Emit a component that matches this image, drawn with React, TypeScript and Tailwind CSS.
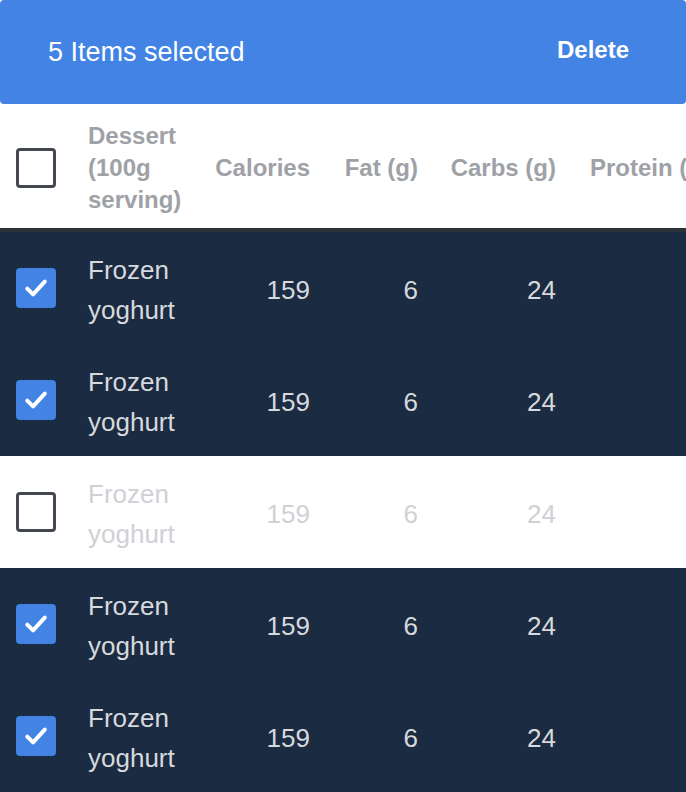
import React from "react";

/* ============================================================
   Data
============================================================ */

interface Row {
  name: string;
  calories: number;
  fat: number;
  carbs: number;
  selected: boolean;
}

const rows: Row[] = [
  { name: "Frozen yoghurt", calories: 159, fat: 6, carbs: 24, selected: true },
  { name: "Frozen yoghurt", calories: 159, fat: 6, carbs: 24, selected: true },
  { name: "Frozen yoghurt", calories: 159, fat: 6, carbs: 24, selected: false },
  { name: "Frozen yoghurt", calories: 159, fat: 6, carbs: 24, selected: true },
  { name: "Frozen yoghurt", calories: 159, fat: 6, carbs: 24, selected: true },
];

const grid =
  "grid grid-cols-[88px_110px_112px_108px_138px_1fr] items-center";

/* ============================================================
   Checkbox
============================================================ */

function Checkbox({ checked }: { checked: boolean }) {
  if (checked) {
    return (
      <div className="ml-4 flex h-10 w-10 items-center justify-center rounded-[4px] bg-[#4283e4]">
        <svg
          width="28"
          height="28"
          viewBox="0 0 24 24"
          fill="none"
          stroke="white"
          strokeWidth="3.4"
          strokeLinecap="round"
          strokeLinejoin="round"
        >
          <path d="M4.5 12.5l5 5L19.5 6.5" />
        </svg>
      </div>
    );
  }

  return (
    <div className="ml-4 h-10 w-10 rounded-[4px] border-[3px] border-[#434750]" />
  );
}

/* ============================================================
   Component
============================================================ */

export default function App() {
  const count = rows.length;

  return (
    <div
      className="h-[792px] w-[686px] overflow-hidden bg-white"
      style={{ fontFamily: '"Liberation Sans", Arial, sans-serif' }}
    >
      {/* Selection toolbar */}
      <div className="flex h-[104px] items-center justify-between rounded-[4px] bg-[#4283e4] pl-12 pr-[57px]">
        <span className="text-[27px] text-white">
          {count} Items selected
        </span>

        <span className="-mt-1 text-2xl font-bold text-white">
          Delete
        </span>
      </div>

      {/* Header */}
      <div
        className={`${grid} h-[128px] border-b-4 border-[#2d3139] text-2xl leading-8 font-bold text-[#9ea1a6]`}
      >
        <div className="pt-1">
          <Checkbox checked={false} />
        </div>
        <div className="pt-1">Dessert (100g serving)</div>
        <div className="pt-1 text-right">Calories</div>
        <div className="pt-1 text-right">Fat (g)</div>
        <div className="pt-1 text-right">Carbs (g)</div>
        <div className="overflow-hidden pt-1 pl-[34px] whitespace-nowrap">
          Protein (g)
        </div>
      </div>

      {/* Rows */}
      {rows.map((row, i) => (
        <div
          key={i}
          className={`${grid} h-28 text-[26px] leading-10 ${
            row.selected
              ? "bg-[#1a2b42] text-[#d7d9dd]"
              : "bg-white text-[#cfd1d6]"
          }`}
        >
          <div>
            <Checkbox checked={row.selected} />
          </div>
          <div className="pt-1">{row.name}</div>
          <div className="pt-1 text-right">{row.calories}</div>
          <div className="pt-1 text-right">{row.fat}</div>
          <div className="pt-1 text-right">{row.carbs}</div>
          <div />
        </div>
      ))}
    </div>
  );
}
